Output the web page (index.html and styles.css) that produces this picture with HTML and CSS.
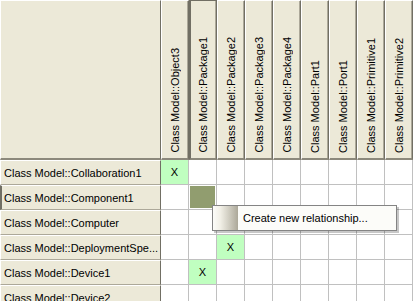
FILE: index.html
```html
<!DOCTYPE html>
<html lang="en">
<head>
    <meta charset="UTF-8">
    <title>Relationship Matrix</title>
    <link rel="stylesheet" href="styles.css">
</head>
<body>
    <div class="matrix">
        <!-- column headers -->
        <div class="corner"></div>
        <div class="col-head"><span>Class Model::Object3</span></div>
        <div class="col-head selected"><span>Class Model::Package1</span></div>
        <div class="col-head"><span>Class Model::Package2</span></div>
        <div class="col-head"><span>Class Model::Package3</span></div>
        <div class="col-head"><span>Class Model::Package4</span></div>
        <div class="col-head"><span>Class Model::Part1</span></div>
        <div class="col-head"><span>Class Model::Port1</span></div>
        <div class="col-head"><span>Class Model::Primitive1</span></div>
        <div class="col-head"><span>Class Model::Primitive2</span></div>

        <div class="row-head">Class Model::Collaboration1</div>
        <div class="cell linked">X</div>
        <div class="cell"></div>
        <div class="cell"></div>
        <div class="cell"></div>
        <div class="cell"></div>
        <div class="cell"></div>
        <div class="cell"></div>
        <div class="cell"></div>
        <div class="cell"></div>

        <div class="row-head selected">Class Model::Component1</div>
        <div class="cell"></div>
        <div class="cell"><div class="focus"></div></div>
        <div class="cell"></div>
        <div class="cell"></div>
        <div class="cell"></div>
        <div class="cell"></div>
        <div class="cell"></div>
        <div class="cell"></div>
        <div class="cell"></div>

        <div class="row-head">Class Model::Computer</div>
        <div class="cell"></div>
        <div class="cell"></div>
        <div class="cell"></div>
        <div class="cell"></div>
        <div class="cell"></div>
        <div class="cell"></div>
        <div class="cell"></div>
        <div class="cell"></div>
        <div class="cell"></div>

        <div class="row-head">Class Model::DeploymentSpe...</div>
        <div class="cell"></div>
        <div class="cell"></div>
        <div class="cell linked">X</div>
        <div class="cell"></div>
        <div class="cell"></div>
        <div class="cell"></div>
        <div class="cell"></div>
        <div class="cell"></div>
        <div class="cell"></div>

        <div class="row-head">Class Model::Device1</div>
        <div class="cell"></div>
        <div class="cell linked">X</div>
        <div class="cell"></div>
        <div class="cell"></div>
        <div class="cell"></div>
        <div class="cell"></div>
        <div class="cell"></div>
        <div class="cell"></div>
        <div class="cell"></div>

        <div class="row-head">Class Model::Device2</div>
        <div class="cell"></div>
        <div class="cell"></div>
        <div class="cell"></div>
        <div class="cell"></div>
        <div class="cell"></div>
        <div class="cell"></div>
        <div class="cell"></div>
        <div class="cell"></div>
        <div class="cell"></div>
    </div>

    <div class="context-menu">
        <div class="menu-item">
            <div class="menu-icon"></div>
            <span class="menu-label">Create new relationship...</span>
        </div>
    </div>
</body>
</html>
```

FILE: styles.css
```css
/* Relationship matrix */
body {
    font-family: "Liberation Sans", Arial, sans-serif;
    font-size: 11px;
    color: #000;
    background-color: #fff;
    margin: 0;
    width: 413px;
    height: 301px;
    overflow: hidden;
    position: relative;
}

.matrix {
    display: grid;
    grid-template-columns: 161px repeat(9, 28px);
    grid-template-rows: 160px repeat(6, 25px);
}

.corner,
.col-head,
.row-head {
    box-sizing: border-box;
    background-color: #ece9d8;
    border-top: 1px solid #fff;
    border-left: 1px solid #fff;
    border-right: 1px solid #716f64;
    border-bottom: 1px solid #aca899;
}

.corner,
.col-head {
    border-bottom: 2px solid #8c897c;
}

.col-head {
    display: flex;
    justify-content: center;
    align-items: flex-end;
    padding-bottom: 5px;
    box-shadow: inset -1px 0 #aca899;
}

.col-head span {
    writing-mode: vertical-rl;
    transform: rotate(180deg);
    white-space: nowrap;
    line-height: 13px;
}

.col-head.selected {
    border-top: 1px solid #716f64;
    border-left: 2px solid #716f64;
}

.row-head {
    display: flex;
    align-items: center;
    padding-left: 3px;
    white-space: nowrap;
    overflow: hidden;
}

.row-head.selected {
    border-left: 2px solid #716f64;
    padding-left: 2px;
}

.cell {
    box-sizing: border-box;
    border-right: 1px solid #c0c0c0;
    border-bottom: 1px solid #c0c0c0;
    display: flex;
    justify-content: center;
    align-items: center;
}

.cell.linked {
    background-color: #c0ffc0;
}

.focus {
    flex: 1;
    align-self: stretch;
    margin: 1px;
    background-color: #919d6f;
}

.context-menu {
    position: absolute;
    left: 212px;
    top: 205px;
    width: 185px;
    height: 26px;
    box-sizing: border-box;
    border: 1px solid #848484;
    background-color: #fcfcf9;
    box-shadow: 2px 2px 0 rgba(0, 0, 0, 0.22);
}

.menu-item {
    display: flex;
    align-items: center;
    height: 100%;
}

.menu-icon {
    width: 25px;
    align-self: stretch;
    background: linear-gradient(to right, #fcfcf9, #f1efe6 30%, #aca899);
}

.menu-label {
    padding-left: 5px;
}
```
